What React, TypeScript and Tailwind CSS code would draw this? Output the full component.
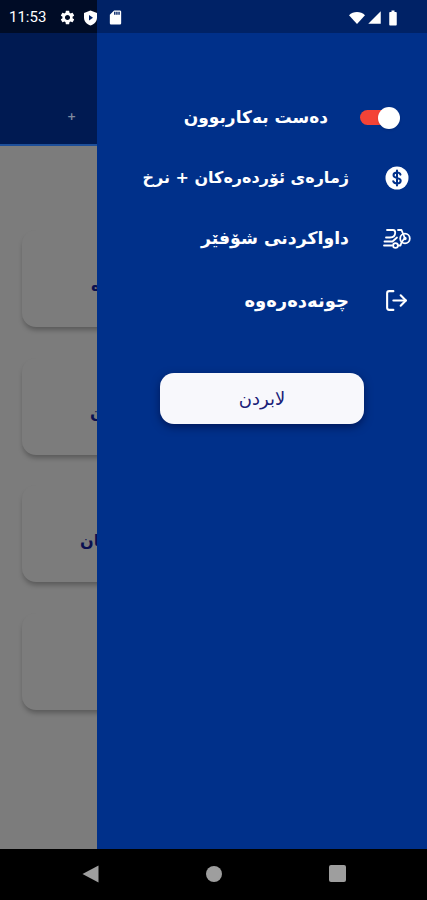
import { MdSettings, MdSdCard, MdSignalCellular4Bar, MdBatteryFull } from 'react-icons/md'
import { LogOut } from 'lucide-react'

const cartes = [
  { id: 1, texte: 'خواردنەوە', pl: 'pl-[69px]' },
  { id: 2, texte: 'شوێنەکان', pl: 'pl-[68px]' },
  { id: 3, texte: 'ئۆردەرەکان', pl: 'pl-[58px]' },
  { id: 4, texte: '', pl: 'pl-[58px]' },
]

const Dollar = () => (
  <svg width="24" height="24" viewBox="0 0 24 24">
    <circle cx="12" cy="12" r="11.5" fill="#fff" />
    <path d="M15.5 8.6c-.5-1.3-1.8-2-3.500-2-2 0-3.500 1-3.500 2.700 0 3.600 7.200 1.800 7.200 5.400 0 1.700-1.600 2.700-3.700 2.700-1.900 0-3.300-.8-3.800-2.200M12 4.600v14.800" fill="none" stroke="#00308a" strokeWidth="2" strokeLinecap="round" />
  </svg>
)

const Shield = () => (
  <svg width="15" height="16" viewBox="0 0 15 16">
    <path d="M7.5 0.500 14 3v4.500c0 3.800-2.700 6.900-6.500 8C3.700 14.400 1 11.300 1 7.500V3z" fill="#fff" />
    <path d="M6 5l4 2.800-4 2.800z" fill="#002266" />
  </svg>
)

const Wifi = () => (
  <svg width="16" height="12" viewBox="0 0 16 12">
    <path d="M0 3.200C2.200 1.200 5 0 8 0s5.800 1.200 8 3.200L8 12z" fill="#fff" />
  </svg>
)

const Livraison = () => (
  <svg width="28" height="20" viewBox="0 0 28 20" fill="none" stroke="#fff" strokeWidth="1.8" strokeLinecap="round" strokeLinejoin="round" className="mr-[-2px]">
    <circle cx="22" cy="9.500" r="4.800" />
    <circle cx="22" cy="9.500" r="0.800" fill="#fff" />
    <circle cx="12.500" cy="16.500" r="2.400" />
    <path d="M4 1h6c1.500 0 2.200 1 2.200 2.500 0 3-2 5-5.200 5H3" />
    <path d="M1 16.500h8M1.500 12.500h8l4.500-4" />
    <path d="M15 1h3.500L22 9.500" />
    <path d="M15 16.500h2.500c.8-3 2-5.500 4.500-7" />
  </svg>
)

export default function App() {
  return (
    <div className="relative flex flex-col w-[427px] h-[900px] overflow-hidden bg-black" style={{ fontFamily: '"DejaVu Sans", "Noto Sans", sans-serif' }}>
      {/* barre d'etat */}
      <div className="absolute top-0 left-0 right-0 h-[35px] z-10 flex items-center justify-between pl-[9px] pr-[25px] text-white">
        <div className="flex items-center">
          <span className="text-[15px] w-[50px]" style={{ fontFamily: 'Roboto, sans-serif' }}>11:53</span>
          <MdSettings size={17} className="mr-[7px]" />
          <Shield />
          <MdSdCard size={17} className="ml-[9px]" />
        </div>
        <div className="flex items-center">
          <Wifi />
          <MdSignalCellular4Bar size={15} className="ml-[2px]" />
          <MdBatteryFull size={18} className="ml-[2px]" />
        </div>
      </div>

      <div className="flex flex-1 min-h-0">
        {/* page derriere le menu */}
        <div className="w-[97px] shrink-0 overflow-hidden bg-[#7c7c7c] flex flex-col">
          <div className="h-[33px] shrink-0 bg-[#000c26]" />
          <div className="h-[113px] shrink-0 bg-[#001a52] border-b-2 border-[#1d4f9a] flex items-start">
            <span className="mt-[78px] ml-[67px] text-[11px] font-bold leading-none text-[#7f8aa0]">+</span>
          </div>
          <div className="flex flex-col gap-[30.700px] pt-[84px] pl-[22px] w-[427px]">
            {cartes.map(c => (
              <div key={c.id} className={`h-[97px] w-[383px] rounded-[14px] bg-[#7c7c7c] shadow-[0_4px_5px_-1px_rgba(0,0,0,0.28)] flex items-center pt-[14px] ${c.pl}`}>
                <span dir="rtl" className="text-[16px] font-bold whitespace-nowrap text-[#0a1050]">{c.texte}</span>
              </div>
            ))}
          </div>
        </div>

        {/* menu lateral */}
        <div className="flex-1 flex flex-col bg-[#00308a]">
          <div className="h-[33px] shrink-0 bg-[#002266]" />
          <div className="flex flex-col pt-[53px] pl-[20px] pr-[18px] text-white">
            <div className="flex items-center justify-end h-[63px]">
              <span dir="rtl" className="text-[17px] font-bold whitespace-nowrap mr-[32px]">دەست بەکاربوون</span>
              <div className="relative w-[40px] h-[24px] mr-[9px] flex items-center">
                <div className="w-[34px] h-[15px] rounded-full bg-[#f44336]" />
                <div className="absolute right-0 top-[1px] w-[22px] h-[22px] rounded-full bg-white shadow" />
              </div>
            </div>
            <div className="flex items-center justify-end h-[58px]">
              <span dir="rtl" className="text-[16px] font-bold whitespace-nowrap mr-[36px]">ژمارەی ئۆردەرەکان + نرخ</span>
              <Dollar />
            </div>
            <div className="flex items-center justify-end h-[64px]">
              <span dir="rtl" className="text-[17.300px] font-bold whitespace-nowrap mr-[34px]">داواکردنی شۆفێر</span>
              <Livraison />
            </div>
            <div className="flex items-center justify-end h-[58px]">
              <span dir="rtl" className="text-[18px] font-bold whitespace-nowrap mr-[35px]">چونەدەرەوە</span>
              <LogOut size={25} strokeWidth={2} />
            </div>
          </div>
          <button dir="rtl" className="mt-[44px] ml-[63px] w-[204px] h-[51px] rounded-[14px] bg-[#f8f8fc] text-[18px] font-medium text-[#1a2078] shadow-[0_3px_8px_rgba(0,0,40,0.5)]">لابردن</button>
        </div>
      </div>

      {/* barre de navigation */}
      <div className="h-[51px] shrink-0 bg-black flex items-center justify-center gap-[107px] pb-[2px]">
        <svg width="17" height="18" viewBox="0 0 17 18"><path d="M16.500 0.500v17L0.500 9z" fill="#9e9e9e" /></svg>
        <div className="w-[16px] h-[16px] rounded-full bg-[#9e9e9e]" />
        <div className="w-[17px] h-[17px] rounded-[2px] bg-[#9e9e9e]" />
      </div>
    </div>
  )
}
